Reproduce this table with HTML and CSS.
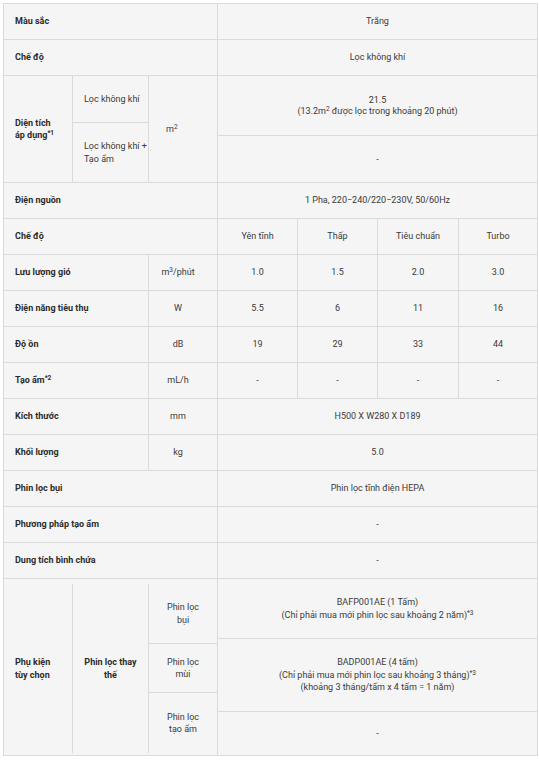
FILE: index.html
```html
<!DOCTYPE html>
<html lang="vi">
<head>
<meta charset="utf-8">
<title>Thông số kỹ thuật</title>
<link rel="stylesheet" href="styles.css">
</head>
<body>
<div class="spec">
  <div class="c lab s13"><span>Màu sắc</span></div>
  <div class="c val s47"><span>Trắng</span></div>

  <div class="c lab s13"><span>Chế độ</span></div>
  <div class="c val s47"><span>Lọc không khí</span></div>

  <div class="c lab area-label"><span>Diện tích<br>áp dụng<sup>*1</sup></span></div>
  <div class="c sub area-a"><span>Lọc không khí</span></div>
  <div class="c sub area-b"><span>Lọc không khí + Tạo ẩm</span></div>
  <div class="c unit-m2"><span>m<sup>2</sup></span></div>
  <div class="c val area-v1"><span>21.5<br>(13.2m<sup>2</sup> được lọc trong khoảng 20 phút)</span></div>
  <div class="c val area-v2"><span>-</span></div>

  <div class="c lab s13"><span>Điện nguồn</span></div>
  <div class="c val s47"><span>1 Pha, 220−240/220−230V, 50/60Hz</span></div>

  <div class="c lab s13"><span>Chế độ</span></div>
  <div class="c val"><span>Yên tĩnh</span></div>
  <div class="c val"><span>Thấp</span></div>
  <div class="c val"><span>Tiêu chuẩn</span></div>
  <div class="c val"><span>Turbo</span></div>

  <div class="c lab s12"><span>Lưu lượng gió</span></div>
  <div class="c unit"><span>m<sup>3</sup>/phút</span></div>
  <div class="c val"><span>1.0</span></div>
  <div class="c val"><span>1.5</span></div>
  <div class="c val"><span>2.0</span></div>
  <div class="c val"><span>3.0</span></div>

  <div class="c lab s12"><span>Điện năng tiêu thụ</span></div>
  <div class="c unit"><span>W</span></div>
  <div class="c val"><span>5.5</span></div>
  <div class="c val"><span>6</span></div>
  <div class="c val"><span>11</span></div>
  <div class="c val"><span>16</span></div>

  <div class="c lab s12"><span>Độ ồn</span></div>
  <div class="c unit"><span>dB</span></div>
  <div class="c val"><span>19</span></div>
  <div class="c val"><span>29</span></div>
  <div class="c val"><span>33</span></div>
  <div class="c val"><span>44</span></div>

  <div class="c lab s12"><span>Tạo ẩm<sup>*2</sup></span></div>
  <div class="c unit"><span>mL/h</span></div>
  <div class="c val"><span>-</span></div>
  <div class="c val"><span>-</span></div>
  <div class="c val"><span>-</span></div>
  <div class="c val"><span>-</span></div>

  <div class="c lab s12"><span>Kích thước</span></div>
  <div class="c unit"><span>mm</span></div>
  <div class="c val s47"><span>H500 X W280 X D189</span></div>

  <div class="c lab s12"><span>Khối lượng</span></div>
  <div class="c unit"><span>kg</span></div>
  <div class="c val s47"><span>5.0</span></div>

  <div class="c lab s13"><span>Phin lọc bụi</span></div>
  <div class="c val s47"><span>Phin lọc tĩnh điện HEPA</span></div>

  <div class="c lab s13"><span>Phương pháp tạo ẩm</span></div>
  <div class="c val s47"><span>-</span></div>

  <div class="c lab s13"><span>Dung tích bình chứa</span></div>
  <div class="c val s47"><span>-</span></div>

  <div class="c acc-left">
    <div class="acc-grid">
      <div class="c lab acc-title"><span>Phụ kiện tùy chọn</span></div>
      <div class="c lab center acc-kind"><span>Phin lọc thay thế</span></div>
      <div class="c subc"><span>Phin lọc bụi</span></div>
      <div class="c subc"><span>Phin lọc mùi</span></div>
      <div class="c subc"><span>Phin lọc tạo ẩm</span></div>
    </div>
  </div>
  <div class="c acc-right">
    <div class="acc-vals">
      <div class="c val"><span>BAFP001AE (1 Tấm)<br>(Chỉ phải mua mới phin lọc sau khoảng 2 năm)<sup>*3</sup></span></div>
      <div class="c val"><span>BADP001AE (4 tấm)<br>(Chỉ phải mua mới phin lọc sau khoảng 3 tháng)<sup>*3</sup><br>(khoảng 3 tháng/tấm x 4 tấm = 1 năm)</span></div>
      <div class="c val"><span>-</span></div>
    </div>
  </div>
</div>
</body>
</html>
```

FILE: styles.css
```css
* { box-sizing: border-box; }

html, body {
  margin: 0;
  padding: 0;
  background: #ffffff;
}

body {
  padding: 3px;
  font-family: Roboto, "Liberation Sans", Arial, sans-serif;
  font-size: 9px;
  line-height: 12.5px;
  color: #3a3a3a;
}

.spec {
  display: inline-grid;
  grid-template-columns: 68px 75px 68px 79px 79px 80px 78px;
  grid-template-rows: 35px 35px 46px 12px 46px repeat(11, 35px) 176px;
  gap: 1px;
  background: #dadada;
  border: 1px solid #dadada;
}

.c {
  background: #f5f5f5;
  display: flex;
  align-items: center;
  min-width: 0;
}

.lab {
  font-weight: bold;
  color: #2b2b2b;
  padding-left: 11px;
}

.val {
  justify-content: center;
  text-align: center;
  padding: 0 4px;
}

.unit {
  justify-content: center;
  text-align: center;
  padding-right: 10px;
}

.sub {
  padding-left: 11px;
}

.center {
  justify-content: center;
  text-align: center;
  padding: 0 6px;
}

sup {
  font-size: 6.5px;
  line-height: 0;
  vertical-align: 3px;
}

.s13 { grid-column: 1 / 4; }
.s12 { grid-column: 1 / 3; }
.s47 { grid-column: 4 / 8; }

.area-label { grid-column: 1; grid-row: 3 / 6; }
.area-a { grid-column: 2; grid-row: 3; }
.area-b { grid-column: 2; grid-row: 4 / 6; }
.unit-m2 { grid-column: 3; grid-row: 3 / 6; padding-left: 17px; }
.area-v1 { grid-column: 4 / 8; grid-row: 3 / 5; line-height: 11px; }
.area-v2 { grid-column: 4 / 8; grid-row: 5; }

.acc-left {
  grid-column: 1 / 4;
  display: block;
  padding: 5px 0 2px;
}

.acc-grid {
  height: 100%;
  display: grid;
  grid-template-columns: 68px 75px 68px;
  grid-template-rows: 59px 48px 60px;
  gap: 1px;
  background: #dadada;
}

.acc-title { grid-column: 1; grid-row: 1 / 4; padding-right: 14px; }
.acc-kind { grid-column: 2; grid-row: 1 / 4; }

.subc {
  grid-column: 3;
  justify-content: center;
  text-align: center;
  padding: 0 12px;
}

.acc-right {
  grid-column: 4 / 8;
  display: block;
}

.acc-vals {
  height: 100%;
  display: grid;
  grid-template-rows: 59px 72px 43px;
  gap: 1px;
  background: #dadada;
}
```
